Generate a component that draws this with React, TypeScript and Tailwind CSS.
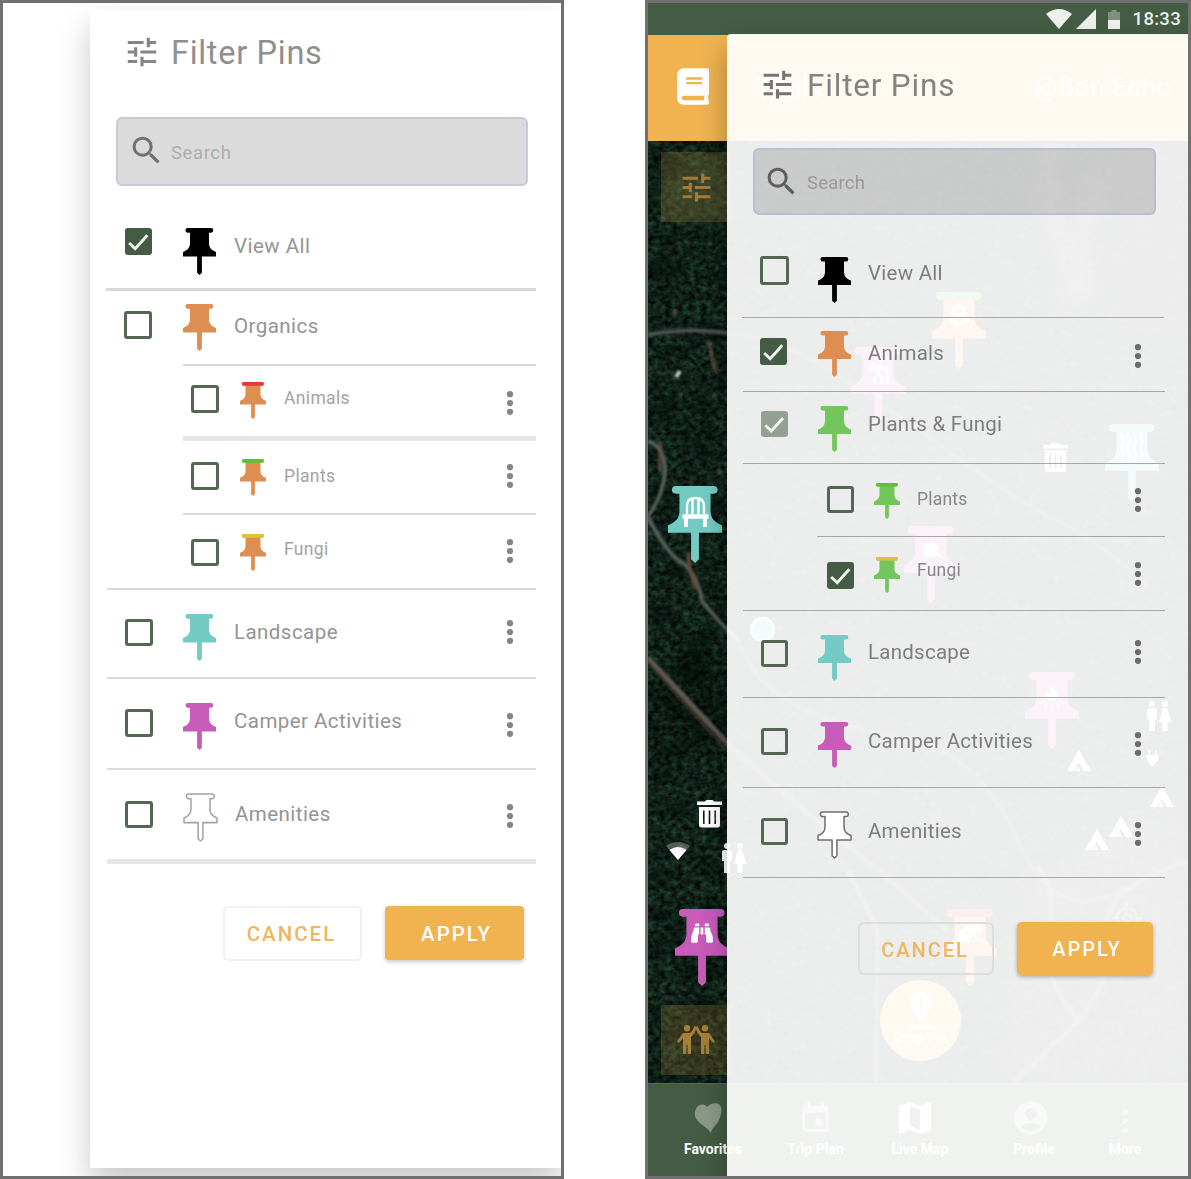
import type { ReactNode } from "react";
import { FaBook, FaBinoculars, FaFrog, FaHiking, FaTrashAlt } from "react-icons/fa";
import { MdAccountCircle, MdEvent, MdLocalFlorist, MdSearch, MdTune, MdWaves } from "react-icons/md";

const PIN_PATH =
  "M4.7 0H28a2.3 2.3 0 0 1 0 4.6H26V15C26 19.5 28.8 22 33 23.5V28H18.9V43.8L16.5 46L14.1 43.8V28H0V23.5C4.2 22 7 19.5 7 15V4.6H4.7a2.3 2.3 0 0 1 0-4.6Z";

function Pin({ color, cap, outline, className }: { color: string; cap?: string; outline?: string; className: string }) {
  return (
    <svg viewBox="0 0 33 46" preserveAspectRatio="none" className={`block shrink-0 overflow-visible ${className}`}>
      <path d={PIN_PATH} fill={color} stroke={outline} strokeWidth={outline ? 1.5 : 0} strokeLinejoin="round" />
      {cap && <rect x="2.4" y="0" width="28" height="4.6" rx="2.3" fill={cap} />}
    </svg>
  );
}

type CheckState = "off" | "on" | "partial";

function Checkbox({ state, className }: { state: CheckState; className: string }) {
  if (state === "off") {
    return <span className={`block shrink-0 rounded-[3px] border-[3px] border-[#526852] ${className}`} />;
  }
  return (
    <span className={`flex shrink-0 items-center justify-center rounded-[3px] ${state === "on" ? "bg-[#445c44]" : "bg-[#93a194]"} ${className}`}>
      <svg viewBox="0 0 26 26" className="h-full w-full">
        <path d="M4 14.5L9.8 20L21.5 7" fill="none" stroke="#f4f6f4" strokeWidth="2.8" />
      </svg>
    </span>
  );
}

function Dots({ className, color }: { className: string; color: string }) {
  return (
    <svg viewBox="0 0 8 26" className={`absolute h-[26px] w-[8px] ${className}`} fill={color}>
      <circle cx="4" cy="4.2" r="3.1" />
      <circle cx="4" cy="13" r="3.1" />
      <circle cx="4" cy="21.8" r="3.1" />
    </svg>
  );
}

interface Item {
  label: string;
  row: string;
  check: CheckState;
  box: string;
  pin: string;
  text: string;
  color: string;
  cap?: string;
  outline?: string;
  dots?: string;
  small?: boolean;
}

const GREEN_PIN = "#73c65c";
const ORANGE_PIN = "#dd8e50";
const TEAL_PIN = "#73cbc4";
const PINK_PIN = "#c95bbb";

const leftItems: Item[] = [
  { label: "View All", row: "ml-[16px] h-[90px] w-[430px] border-b-[3px] border-[#d9d9d9] pl-[19px]", check: "on", box: "mt-[27px] h-[27px] w-[27px]", pin: "mt-[27px] ml-[31px] h-[47px]", text: "mt-[33px]", color: "#000" },
  { label: "Organics", row: "ml-[16px] h-[73px] pl-[18px]", check: "off", box: "mt-[20px] h-[28px] w-[28px]", pin: "mt-[13px] ml-[31px] h-[47px]", text: "mt-[23px]", color: ORANGE_PIN },
  { label: "Animals", row: "ml-[93px] h-[77px] w-[353px] border-t-2 border-[#d9d9d9] pl-[8px] border-b-[5px] border-b-[#e7e7e7]", check: "off", box: "mt-[19px] h-[28px] w-[28px]", pin: "mt-[16px] ml-[21px] h-[37px]", text: "mt-[20px]", color: ORANGE_PIN, cap: "#e53a35", dots: "top-[24px] right-[22px]", small: true },
  { label: "Plants", row: "ml-[93px] h-[74px] w-[353px] border-b-2 border-[#dbdbdb] pl-[8px]", check: "off", box: "mt-[21px] h-[28px] w-[28px]", pin: "mt-[18px] ml-[21px] h-[37px]", text: "mt-[23px]", color: ORANGE_PIN, cap: "#5bc236", dots: "top-[22px] right-[22px]", small: true },
  { label: "Fungi", row: "ml-[93px] h-[73px] w-[353px] pl-[8px]", check: "off", box: "mt-[24px] h-[27px] w-[28px]", pin: "mt-[19px] ml-[21px] h-[37px]", text: "mt-[22px]", color: ORANGE_PIN, cap: "#e1c13c", dots: "top-[23px] right-[22px]", small: true },
  { label: "Landscape", row: "ml-[17px] h-[91px] w-[429px] border-y-2 border-[#d9d9d9] pl-[18px]", check: "off", box: "mt-[29px] h-[27px] w-[28px]", pin: "mt-[24px] ml-[30px] h-[47px]", text: "mt-[30px]", color: TEAL_PIN, dots: "top-[29px] right-[22px]" },
  { label: "Camper Activities", row: "ml-[17px] h-[91px] w-[429px] border-b-2 border-[#d9d9d9] pl-[18px]", check: "off", box: "mt-[30px] h-[28px] w-[28px]", pin: "mt-[24px] ml-[30px] h-[47px]", text: "mt-[30px]", color: PINK_PIN, dots: "top-[33px] right-[22px]" },
  { label: "Amenities", row: "ml-[17px] h-[94px] w-[429px] border-b-[5px] border-[#e7e7e7] pl-[18px]", check: "off", box: "mt-[31px] h-[27px] w-[28px]", pin: "mt-[24px] ml-[31px] h-[47px]", text: "mt-[32px]", color: "#fff", outline: "#a3a3a3", dots: "top-[33px] right-[22px]" },
];

const rightItems: Item[] = [
  { label: "View All", row: "ml-[15px] h-[81px] w-[422px] border-b border-[#a8a8a8] pl-[18px]", check: "off", box: "mt-[19px] h-[29px] w-[29px]", pin: "mt-[20px] ml-[29px] h-[46px]", text: "mt-[24px]", color: "#000" },
  { label: "Animals", row: "ml-[16px] h-[74px] w-[422px] border-b border-[#a8a8a8] pl-[17px]", check: "on", box: "mt-[20px] h-[27px] w-[27px]", pin: "mt-[13px] ml-[31px] h-[46px]", text: "mt-[23px]", color: ORANGE_PIN, dots: "top-[25px] right-[23px]" },
  { label: "Plants & Fungi", row: "ml-[16px] h-[72px] w-[422px] border-b border-[#a8a8a8] pl-[18px]", check: "partial", box: "mt-[19px] h-[26px] w-[27px]", pin: "mt-[14px] ml-[30px] h-[46px]", text: "mt-[20px]", color: GREEN_PIN },
  { label: "Plants", row: "ml-[90px] h-[73px] w-[348px] border-b border-[#a8a8a8] pl-[10px]", check: "off", box: "mt-[22px] h-[27px] w-[27px]", pin: "mt-[19px] ml-[20px] h-[36px]", text: "mt-[23px]", color: GREEN_PIN, cap: "#5bc236", dots: "top-[23px] right-[23px]", small: true },
  { label: "Fungi", row: "ml-[90px] h-[73px] w-[348px] pl-[10px]", check: "on", box: "mt-[25px] h-[27px] w-[27px]", pin: "mt-[20px] ml-[20px] h-[36px]", text: "mt-[21px]", color: GREEN_PIN, cap: "#e1c13c", dots: "top-[24px] right-[23px]", small: true },
  { label: "Landscape", row: "ml-[16px] h-[88px] w-[422px] border-y border-[#a8a8a8] pl-[18px]", check: "off", box: "mt-[29px] h-[27px] w-[27px]", pin: "mt-[24px] ml-[30px] h-[46px]", text: "mt-[29px]", color: TEAL_PIN, dots: "top-[28px] right-[23px]" },
  { label: "Camper Activities", row: "ml-[16px] h-[90px] w-[422px] border-b border-[#a8a8a8] pl-[18px]", check: "off", box: "mt-[30px] h-[27px] w-[27px]", pin: "mt-[24px] ml-[30px] h-[46px]", text: "mt-[31px]", color: PINK_PIN, dots: "top-[33px] right-[23px]" },
  { label: "Amenities", row: "ml-[16px] h-[90px] w-[422px] border-b border-[#a8a8a8] pl-[18px]", check: "off", box: "mt-[30px] h-[27px] w-[27px]", pin: "mt-[24px] ml-[30px] h-[46px]", text: "mt-[31px]", color: "#fff", outline: "#6f6f6f", dots: "top-[33px] right-[23px]" },
];

function FilterRow({ item, side }: { item: Item; side: "left" | "right" }) {
  const left = side === "left";
  return (
    <li className={`relative flex items-start ${item.row}`}>
      <Checkbox state={item.check} className={item.box} />
      <Pin color={item.color} cap={item.cap} outline={item.outline} className={`${item.pin} ${item.small ? "w-[26px]" : "w-[33px]"}`} />
      <span
        className={`leading-[24px] whitespace-nowrap ${item.text} ${
          item.small
            ? left ? "ml-[18px] text-[17.5px] tracking-[0.35px] text-[#a3a3a3]" : "ml-[17px] text-[17.5px] tracking-[0.2px] text-[#868686]"
            : left ? "ml-[18px] text-[20.5px] tracking-[0.45px] text-[#949494]" : "ml-[17px] text-[20.5px] tracking-[0.25px] text-[#7d7d7d]"
        }`}
      >
        {item.label}
      </span>
      {item.dots && <Dots className={item.dots} color={left ? "#858585" : "#6b6b6b"} />}
    </li>
  );
}

function At({ className, children }: { className: string; children?: ReactNode }) {
  return <div className={`absolute ${className}`}>{children}</div>;
}

function MapPin({ place, color, cap, children }: { place: string; color: string; cap?: string; children?: ReactNode }) {
  return (
    <At className={`h-[77px] w-[54px] ${place}`}>
      <Pin color={color} cap={cap} className="h-[77px] w-[54px]" />
      <div className="absolute inset-x-0 top-[8px] flex h-[31px] items-center justify-center text-white">{children}</div>
    </At>
  );
}

function Tent({ place }: { place: string }) {
  return (
    <svg viewBox="0 0 24 21" className={`absolute h-[21px] w-[24px] ${place}`} fill="#fff">
      <path d="M12 0L24 21H17L11.6 13L7 21H0Z" />
      <path d="M10.8 16L13.5 21H8.5Z" />
    </svg>
  );
}

function Couple({ place }: { place: string }) {
  return (
    <svg viewBox="0 0 26 30" className={`absolute h-[30px] w-[26px] ${place}`} fill="#fff">
      <circle cx="6" cy="3" r="3" />
      <path d="M3 7H9Q11 7 11 9V18H9V30H3V18H1V9Q1 7 3 7Z" />
      <circle cx="19" cy="3" r="3" />
      <path d="M17 7H21L25.5 21H21.5V30H16.5V21H13Z" />
    </svg>
  );
}

function MapCanvas() {
  return (
    <div className="relative h-[942px] overflow-hidden bg-[#12231d]">
      <svg className="absolute inset-0 h-full w-full" viewBox="0 0 540 942">
        <defs>
          <filter id="trees" x="0" y="0" width="100%" height="100%" colorInterpolationFilters="sRGB">
            <feTurbulence type="fractalNoise" baseFrequency="0.17 0.2" numOctaves="3" seed="8" />
            <feColorMatrix values="0.18 0.05 0 0 -0.045  0.4 0 0 0 -0.055  0.24 0 0 0 -0.015  0 0 0 0 1" />
          </filter>
          <filter id="patches" x="0" y="0" width="100%" height="100%" colorInterpolationFilters="sRGB">
            <feTurbulence type="fractalNoise" baseFrequency="0.03 0.05" numOctaves="3" seed="3" />
            <feColorMatrix values="0 0 0 0 0.01  0 0 0 0 0.04  0 0 0 0 0.035  2.4 0 0 0 -0.95" />
          </filter>
          <filter id="soft">
            <feGaussianBlur stdDeviation="0.8" />
          </filter>
          <filter id="haze">
            <feGaussianBlur stdDeviation="9" />
          </filter>
        </defs>
        <rect width="540" height="942" filter="url(#trees)" />
        <rect width="540" height="942" filter="url(#patches)" opacity=".55" />
        <g filter="url(#haze)">
          <ellipse cx="50" cy="50" rx="40" ry="35" fill="#274a34" opacity=".35" />
          <ellipse cx="40" cy="560" rx="40" ry="50" fill="#04110f" opacity=".25" />
          <path d="M405 0Q395 60 415 110T405 160M450 30Q432 80 438 160" stroke="#d8c8b8" strokeWidth="12" fill="none" opacity=".35" />
          <path d="M470 0H540V190H460Z" fill="#2a2a2a" opacity=".6" />
          <path d="M370 740L540 660V942H350Z" fill="#57524e" opacity=".3" />
        </g>
        <g fill="none" filter="url(#soft)">
          <path d="M0 194Q40 186 80 192" stroke="#4d5253" strokeWidth="4" />
          <path d="M80 192Q130 197 180 228T300 310T410 380T500 446" stroke="#4a4f50" strokeWidth="4" opacity=".6" />
          <path d="M0 300Q17 306 17 330Q16 352 0 376M0 376Q20 415 35 422Q50 435 54 460Q70 480 90 500" stroke="#565b5a" strokeWidth="4" />
          <path d="M90 500Q110 550 160 570T260 600Q330 610 370 700T480 745" stroke="#5c6460" strokeWidth="4" opacity=".5" />
          <path d="M40 412Q42 435 48 448" stroke="#6b4f3d" strokeWidth="4" opacity=".8" />
          <path d="M0 517L83 606" stroke="#5f5854" strokeWidth="5" />
          <path d="M83 606Q150 665 200 705T300 790" stroke="#60605d" strokeWidth="5" opacity=".5" />
          <path d="M2 524L83 614" stroke="#3f3a25" strokeWidth="3" opacity=".8" />
          <path d="M59 200Q64 206 64 218L68 232M27 168V174M65 253L68 256M12 330V300M70 328L73 332" stroke="#6e5546" strokeWidth="4" opacity=".65" />
          <path d="M28 236L32 230" stroke="#c5c7bf" strokeWidth="4" />
          <path d="M200 730L230 790L228 942M390 725Q410 750 400 790T430 880L365 942M430 880Q470 830 460 790T540 720" stroke="#8a8983" strokeWidth="4" opacity=".45" />
        </g>
      </svg>

      <At className="top-[11px] left-[13px] flex h-[70px] w-[70px] items-center justify-center bg-[#f0b350]/18">
        <MdTune className="h-[37px] w-[37px] text-[#a57c36]" />
      </At>
      <At className="top-[864px] left-[13px] h-[70px] w-[70px] bg-[#f0b350]/18">
        <svg viewBox="0 0 38 29" className="absolute top-[20px] left-[16px] h-[29px] w-[38px]" fill="#a57f37">
          <circle cx="10" cy="3.2" r="3.2" />
          <circle cx="28" cy="3.2" r="3.2" />
          <path d="M6 8H13Q16 6 17 1L19.5 2Q18.5 8 14 12V29H10.6V20H9.4V29H6V13L1.8 18L0 16.2Z" />
          <path d="M32 8H25Q22 6 21 1L18.5 2Q19.5 8 24 12V29H27.4V20H28.6V29H32V13L36.2 18L38 16.2Z" />
        </svg>
      </At>

      <MapPin place="top-[151px] left-[284px]" color={ORANGE_PIN} cap="#5bc236">
        <MdLocalFlorist className="h-[27px] w-[27px]" />
      </MapPin>
      <MapPin place="top-[206px] left-[203px]" color={PINK_PIN}>
        <FaHiking className="h-[27px] w-[27px]" />
      </MapPin>
      <MapPin place="top-[283px] left-[457px]" color={TEAL_PIN}>
        <MdWaves className="h-[34px] w-[34px] rotate-90" />
      </MapPin>
      <MapPin place="top-[345px] left-[20px]" color={TEAL_PIN}>
        <svg viewBox="0 0 27 31" className="mt-[3px] h-[31px] w-[27px] shrink-0" fill="none" stroke="#fff">
          <path d="M5 18V10Q5 2 13.5 2Q22 2 22 10V18M10.5 3V18M16.5 3V18" strokeWidth="2.4" />
          <path d="M0.5 20.5H26.5" strokeWidth="4.5" />
          <path d="M4 20V31M23 20V31" strokeWidth="4" />
        </svg>
      </MapPin>
      <MapPin place="top-[385px] left-[256px]" color={PINK_PIN}>
        <svg viewBox="0 0 24 20" className="h-[20px] w-[24px]">
          <circle cx="12" cy="10" r="7.5" fill="#fff" />
          <path d="M1 3L23 17" stroke="#fff" strokeWidth="2" />
        </svg>
      </MapPin>
      <MapPin place="top-[531px] left-[377px]" color={PINK_PIN}>
        <svg viewBox="0 0 26 28" className="mt-[4px] h-[28px] w-[26px]" fill="none" stroke="#fff" strokeWidth="2.2" strokeLinecap="round">
          <path d="M13 1Q14 5 18 8Q21 13 16.5 16H10Q5.5 13 8 8Q9 10 11 10Q10 5 13 1Z" fill="#fff" stroke="none" />
          <path d="M13 20V26M8.5 19.5L6 24M17.5 19.5L20 24M5 17L1 19M21 17L25 19" />
        </svg>
      </MapPin>
      <MapPin place="top-[768px] left-[27px]" color={PINK_PIN}>
        <FaBinoculars className="h-[22px] w-[22px]" />
      </MapPin>
      <MapPin place="top-[768px] left-[295px]" color={ORANGE_PIN} cap="#e53a35">
        <FaFrog className="h-[25px] w-[25px]" />
      </MapPin>

      <At className="top-[476px] left-[102px] h-[25px] w-[25px] rounded-full border-[2px] border-white bg-[#73cbc4]" />
      <svg viewBox="0 0 25 29" className="absolute top-[658px] left-[49px] h-[29px] w-[25px]" fill="#fff">
        <path d="M8 2.5Q8.5 1 10 1H15Q16.5 1 17 2.5H25V6H0V2.5Z" />
        <path fillRule="evenodd" d="M2 8H23V26Q23 28.5 20.5 28.5H4.5Q2 28.5 2 26ZM6 11.5V25H7.6V11.5ZM11.7 11.5V25H13.3V11.5ZM17.4 11.5V25H19V11.5Z" />
      </svg>
      <FaTrashAlt className="absolute top-[302px] left-[395px] h-[29px] w-[25px] text-white" />
      <svg viewBox="0 0 24 18" className="absolute top-[701px] left-[18px] h-[18px] w-[24px]">
        <path d="M0 4Q12 -4 24 4L12 18Z" fill="#fff" opacity=".3" />
        <path d="M3.5 8Q12 2 20.5 8L12 18Z" fill="#fff" />
      </svg>
      <Couple place="top-[702px] left-[73px]" />
      <Couple place="top-[560px] left-[498px]" />
      <svg viewBox="0 0 13 17" className="absolute top-[609px] left-[498px] h-[17px] w-[13px]" fill="#fff">
        <path d="M2.5 0H4V5H9V0H10.5V5H13Q12.5 11 7.5 16H5.5Q.5 11 0 5H2.5Z" />
      </svg>
      <Tent place="top-[609px] left-[419px]" />
      <Tent place="top-[645px] left-[502px]" />
      <Tent place="top-[675px] left-[461px]" />
      <Tent place="top-[688px] left-[437px]" />
      <svg viewBox="0 0 30 30" className="absolute top-[762px] left-[464px] h-[30px] w-[30px] opacity-50" fill="none" stroke="#f0b350" strokeWidth="2.5">
        <circle cx="15" cy="15" r="10" />
        <circle cx="15" cy="15" r="4" />
        <path d="M15 0V5M15 25V30M0 15H5M25 15H30" />
      </svg>
      <At className="top-[839px] left-[232px] flex h-[81px] w-[81px] flex-col items-center rounded-full bg-[#f0b350]">
        <svg viewBox="0 0 26 37" className="mt-[12px] h-[37px] w-[26px] shrink-0" fill="#fff">
          <path fillRule="evenodd" d="M13 0C6.5 0 2 4.8 2 11C2 18 13 30 13 30S24 18 24 11C24 4.8 19.5 0 13 0ZM12 5H14V10H19V12H14V18H12V12H7V10H12Z" />
          <rect x="0" y="33" width="26" height="4" />
        </svg>
        <span className="text-[14px] leading-[18px] font-bold text-white">Drop Pin</span>
      </At>
    </div>
  );
}

function TabItem({ label, width, children }: { label: string; width: string; children: ReactNode }) {
  return (
    <div className={`flex shrink-0 flex-col items-center leading-[18px] font-bold text-white ${width}`}>
      <div className="flex h-[40px] items-center justify-center">{children}</div>
      <span className="mt-[2px] text-[14px]">{label}</span>
    </div>
  );
}

function SearchBox({ className, icon, text }: { className: string; icon: string; text: string }) {
  return (
    <div className={`flex items-start rounded-[6px] border-2 ${className}`}>
      <MdSearch className={`shrink-0 ${icon}`} />
      <span className={`text-[18.5px] leading-[24px] ${text}`}>Search</span>
    </div>
  );
}

export default function App() {
  return (
    <main className="flex h-[1179px] w-[1191px] justify-between overflow-hidden bg-white font-['Roboto',sans-serif]">
      <section className="relative h-[1179px] w-[564px] overflow-hidden border-[3px] border-[#707070] bg-white">
        <div className="mt-[7px] ml-[87px] h-[1158px] w-[471px] bg-white shadow-[0_16px_30px_rgba(0,0,0,0.22)]">
          <header className="flex h-[107px] items-start pt-[23px] pl-[33px] text-[#868686]">
            <MdTune className="h-[38px] w-[38px] shrink-0" />
            <h1 className="ml-[10px] text-[32.5px] leading-[40px] tracking-[0.7px] text-[#8f8f8f]">Filter Pins</h1>
          </header>
          <SearchBox
            className="ml-[26px] h-[69px] w-[412px] border-[#c9c9dc] bg-[#dbdbdb]"
            icon="mt-[13px] ml-[10px] h-[37px] w-[37px] text-[#707070]"
            text="mt-[22px] ml-[6px] tracking-[0.6px] text-[#adadad]"
          />
          <ul className="pt-[15px]">
            {leftItems.map((item) => (
              <FilterRow key={item.label} item={item} side="left" />
            ))}
          </ul>
          <div className="mt-[42px] flex text-[20.5px] leading-[24px] font-medium tracking-[2px]">
            <button className="ml-[133px] h-[55px] w-[139px] rounded-[5px] border-2 border-[#f1f1f1] pr-[2px] text-[#efb65d]">CANCEL</button>
            <button className="ml-[23px] h-[54px] w-[139px] rounded-[4px] bg-[#f0b350] pt-[2px] pl-[4px] text-white shadow-[0_2px_4px_rgba(0,0,0,0.22)]">APPLY</button>
          </div>
        </div>
      </section>

      <section className="relative h-[1179px] w-[546px] overflow-hidden border-[3px] border-[#707070] bg-[#445c44]">
        <div className="flex h-[32px] items-center justify-end pr-[7px] text-[#edf1ed]">
          <svg viewBox="0 0 26 20" className="mr-[4px] h-[20px] w-[26px]" fill="currentColor">
            <path d="M0 5Q13 -5 26 5L13 20Z" />
          </svg>
          <svg viewBox="0 0 20 20" className="mr-[12px] h-[20px] w-[20px]" fill="currentColor">
            <path d="M20 0V20H0Z" />
          </svg>
          <svg viewBox="0 0 12 19" className="mr-[13px] h-[19px] w-[12px]" fill="currentColor">
            <path d="M3.5 0H8.5V2H12V10H0V2H3.5Z" opacity=".35" />
            <rect y="10" width="12" height="9" />
          </svg>
          <span className="text-[18.5px] leading-[24px] font-medium tracking-[0.3px]">18:33</span>
        </div>
        <div className="relative h-[106px] bg-[#f0b350] text-white">
          <FaBook className="absolute top-[33px] left-[29px] h-[37px] w-[32px]" />
          <At className="top-[38px] left-[107px] text-[28px] leading-[32px]">Trails</At>
          <At className="top-[36px] right-[16px] text-[26px] leading-[32px] tracking-[0.6px]">@Bon Echo</At>
        </div>
        <MapCanvas />
        <nav className="flex h-[93px] border-t border-[#5b5f8c] bg-[#445c44] pt-[14px]">
          <TabItem label="Favorites" width="w-[130px]">
            <svg viewBox="0 0 28 30" className="mr-[10px] h-[30px] w-[28px]" fill="#8b998b">
              <path d="M17 30C14 25 7 22 3 17C-1 12 1 4 6 2C9 1 12 2 13 4C17 0 23-1 26 2C29 6 27 14 24 19C21 23 18 25 17 30Z" />
            </svg>
          </TabItem>
          <TabItem label="Trip Plan" width="w-[75px]">
            <MdEvent className="h-[35px] w-[35px] text-white/50" />
          </TabItem>
          <TabItem label="Live Map" width="w-[134px]">
            <svg viewBox="0 0 32 32" className="mr-[10px] h-[32px] w-[32px]" fill="#fff">
              <path fillRule="evenodd" d="M0 4L11 0L21 4L32 0V28L21 32L11 28L0 32ZM11 4V24L21 28V8Z" />
            </svg>
          </TabItem>
          <TabItem label="Profile" width="w-[94px]">
            <MdAccountCircle className="mr-[6px] h-[40px] w-[40px] text-white/50" />
          </TabItem>
          <TabItem label="More" width="w-[88px]">
            <svg viewBox="0 0 8 26" className="mt-[6px] h-[26px] w-[8px]" fill="#fff" opacity=".5">
              <circle cx="4" cy="4" r="3" />
              <circle cx="4" cy="13" r="3" />
              <circle cx="4" cy="22" r="3" />
            </svg>
          </TabItem>
        </nav>

        <div className="absolute top-[31px] left-[79px] h-[1150px] w-[470px] rounded-tl-[4px] bg-white/92 shadow-[0_14px_28px_rgba(0,0,0,0.3)]">
          <header className="flex h-[114px] items-start pt-[32px] pl-[32px] text-[#757575]">
            <MdTune className="h-[37px] w-[37px] shrink-0" />
            <h1 className="ml-[11px] text-[31.5px] leading-[40px] tracking-[0.8px] text-[#858380]">Filter Pins</h1>
          </header>
          <SearchBox
            className="ml-[26px] h-[67px] w-[403px] border-[#bcbcd3] bg-black/14"
            icon="mt-[13px] ml-[8px] h-[37px] w-[37px] text-[#5e5e5e]"
            text="mt-[21px] ml-[7px] tracking-[0.2px] text-[#999]"
          />
          <ul className="pt-[22px]">
            {rightItems.map((item) => (
              <FilterRow key={item.label} item={item} side="right" />
            ))}
          </ul>
          <div className="mt-[44px] flex text-[20px] leading-[24px] font-medium tracking-[2px]">
            <button className="ml-[131px] h-[53px] w-[136px] rounded-[6px] border-2 border-[#dcdedd] pt-[2px] pr-[2px] text-[#efb65d]">CANCEL</button>
            <button className="ml-[23px] h-[53px] w-[136px] rounded-[5px] bg-[#f0b350] pl-[4px] text-white shadow-[0_2px_4px_rgba(0,0,0,0.3)]">APPLY</button>
          </div>
        </div>
      </section>
    </main>
  );
}
